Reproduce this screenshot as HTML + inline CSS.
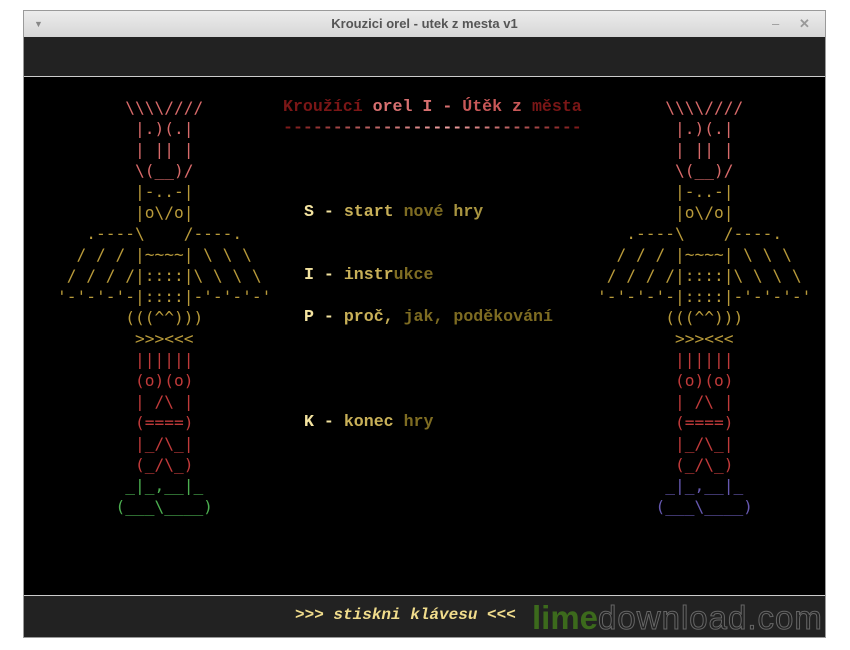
<!DOCTYPE html>
<html><head><meta charset="utf-8"><style>
*{margin:0;padding:0}
body{width:850px;height:650px;background:#fff;position:relative;overflow:hidden;font-family:"Liberation Sans",sans-serif}
.win{position:absolute;left:23px;top:10px;width:803px;height:628px;background:#000;border:1px solid #9a9a9a;box-sizing:border-box}
.title{position:absolute;left:0;top:0;width:801px;height:26px;background:linear-gradient(#ececec,#d6d6d6);text-align:center;font:bold 13px/26px "Liberation Sans",sans-serif;color:#555}
.tb{position:absolute;left:0;top:26px;width:801px;height:39px;background:#222}
.l1{position:absolute;left:0;top:65px;width:801px;height:1px;background:#ccc}
.l2{position:absolute;left:0;top:584px;width:801px;height:1px;background:#ccc}
.bb{position:absolute;left:0;top:585px;width:801px;height:41px;background:#222}
pre{position:absolute;font-family:"DejaVu Sans Mono",monospace;font-size:16.2px;line-height:21px;white-space:pre}
.p{color:#d86a6a}.y{color:#b89a3a}.r{color:#c03a3a}.g{color:#4caf50}.v{color:#6658b0}
.m{position:absolute;font:bold 16.6px/20px "Liberation Mono",monospace;white-space:pre}
.k{color:#f3e3a0}.a{color:#c8b058}.b{color:#7e6c22}.c{color:#a89440}
</style></head><body>
<div class="win">
<div class="title">Krouzici orel - utek z mesta v1
<span style="position:absolute;left:10px;top:0;color:#888;font-size:9px">▼</span>
<span style="position:absolute;left:748px;top:0;color:#999;font-weight:normal">–</span>
<span style="position:absolute;left:775px;top:0;color:#999">✕</span></div>
<div class="tb"></div><div class="l1"></div><div class="l2"></div>
<div class="bb"><div style="position:absolute;left:271px;top:10px;font:italic bold 16px 'Liberation Mono',monospace;color:#f0dc8c">&gt;&gt;&gt; stiskni klávesu &lt;&lt;&lt;</div></div>
</div>
<pre style="left:57px;top:97px"><span class="p">       \\\\////
        |.)(.|
        | || |
        \(__)/</span><span class="y">
        |-..-|
        |o\/o|
   .----\    /----.
  / / / |~~~~| \ \ \
 / / / /|::::|\ \ \ \
'-'-'-'-|::::|-'-'-'-'
       (((^^)))
        &gt;&gt;&gt;&lt;&lt;&lt;</span><span class="r">
        ||||||
        (o)(o)
        | /\ |
        (====)
        |_/\_|
        (_/\_)</span><span class="g">
       _|_,__|_
      (___\____)</span></pre>
<pre style="left:597px;top:97px"><span class="p">       \\\\////
        |.)(.|
        | || |
        \(__)/</span><span class="y">
        |-..-|
        |o\/o|
   .----\    /----.
  / / / |~~~~| \ \ \
 / / / /|::::|\ \ \ \
'-'-'-'-|::::|-'-'-'-'
       (((^^)))
        &gt;&gt;&gt;&lt;&lt;&lt;</span><span class="r">
        ||||||
        (o)(o)
        | /\ |
        (====)
        |_/\_|
        (_/\_)</span><span class="v">
       _|_,__|_
      (___\____)</span></pre>
<div class="m" style="left:283px;top:97px"><span style="color:#7a1616">Kroužící </span><span style="color:#d87070">orel I - </span><span style="color:#c85858">Útěk z </span><span style="color:#7a1616">města</span></div>
<div class="m" style="left:283px;top:118px;background:linear-gradient(90deg,#7a1616,#f0a0a0 55%,#7a1616);-webkit-background-clip:text;color:transparent">------------------------------</div>
<div class="m" style="left:304px;top:202px"><span class="k">S - </span><span class="a">start </span><span class="b">nové </span><span class="c">hry</span></div>
<div class="m" style="left:304px;top:265px"><span class="k">I - </span><span class="a">instr</span><span class="b">ukce</span></div>
<div class="m" style="left:304px;top:307px"><span class="k">P - </span><span class="a">proč, </span><span class="b">jak, </span><span class="b">poděkování</span></div>
<div class="m" style="left:304px;top:412px"><span class="k">K - </span><span class="a">konec </span><span class="b">hry</span></div>
<div style="position:absolute;left:532px;top:600px;font:bold 33px/36px 'Liberation Sans',sans-serif;white-space:nowrap"><span style="color:#3c6a1c">lime</span><span style="font-weight:normal;-webkit-text-stroke:1px #666;color:transparent;letter-spacing:1px">download.com</span></div>
</body></html>
